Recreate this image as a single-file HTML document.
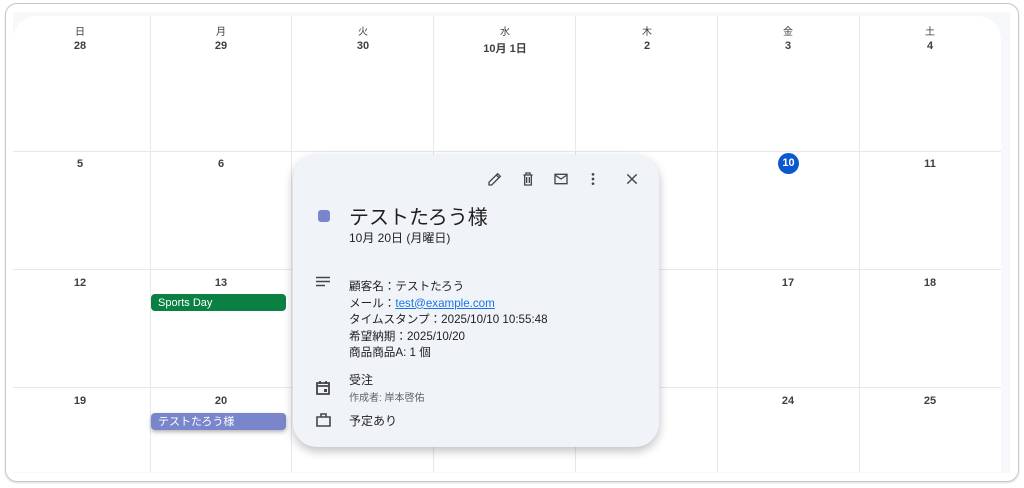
<!DOCTYPE html>
<html><head><meta charset="utf-8"><style>
*{margin:0;padding:0;box-sizing:border-box}
body{width:1024px;height:488px;background:#fff;font-family:"Liberation Sans","Noto Sans CJK JP",sans-serif;position:relative;overflow:hidden;color:#3c4043}
.frame{position:absolute;left:5px;top:3px;width:1014px;height:479px;border:1px solid #c8c8c8;border-radius:12px;background:#fff;box-shadow:0 1px 2px rgba(0,0,0,.15)}
.band{position:absolute;left:13px;top:12px;width:997px;height:461px;background:#f6f8fc}
.cal{position:absolute;left:13px;top:16px;width:988px;height:456px;background:#fff;border-radius:24px 24px 0 0}
.v{position:absolute;top:16px;height:456px;width:1px;background:#e6e8ec}
.h{position:absolute;left:13px;width:988px;height:1px;background:#e6e8ec}
.t{position:absolute;transform:translateX(-50%);font-size:11px;font-weight:bold;color:#3c4043;white-space:nowrap}
.d{position:absolute;transform:translateX(-50%);font-size:10px;color:#3c4043}
.ev{position:absolute;left:151px;width:135px;height:17px;border-radius:4px;color:#fff;font-size:11px;padding-left:7px;line-height:18px}
.pop{position:absolute;left:293px;top:155px;width:366px;height:292px;background:#f0f4f9;border-radius:24px;box-shadow:0 4px 10px rgba(0,0,0,.25)}
.p{position:absolute;white-space:nowrap}
svg{position:absolute}
</style></head><body>
<div class="frame"></div>
<div class="band"></div>
<div class="cal"></div>
<div class="v" style="left:150px"></div><div class="v" style="left:291px"></div><div class="v" style="left:433px"></div><div class="v" style="left:575px"></div><div class="v" style="left:717px"></div><div class="v" style="left:859px"></div>
<div class="h" style="top:151px"></div><div class="h" style="top:269px"></div><div class="h" style="top:387px"></div>
<div class="d" style="left:80px;top:23px">日</div><div class="d" style="left:221px;top:23px">月</div><div class="d" style="left:363px;top:23px">火</div><div class="d" style="left:505px;top:23px">水</div><div class="d" style="left:647px;top:23px">木</div><div class="d" style="left:788px;top:23px">金</div><div class="d" style="left:930px;top:23px">土</div>
<div class="t" style="left:80px;top:40px">28</div><div class="t" style="left:221px;top:40px">29</div><div class="t" style="left:363px;top:40px">30</div><div class="t" style="left:505px;top:40px">10月 1日</div><div class="t" style="left:647px;top:40px">2</div><div class="t" style="left:788px;top:40px">3</div><div class="t" style="left:930px;top:40px">4</div>
<div class="t" style="left:80px;top:158px">5</div><div class="t" style="left:221px;top:158px">6</div>
<div style="position:absolute;left:778px;top:153px;width:21px;height:21px;border-radius:50%;background:#0b57d0;color:#fff;font-size:11px;font-weight:bold;text-align:center;line-height:21px">10</div>
<div class="t" style="left:930px;top:158px">11</div>
<div class="t" style="left:80px;top:277px">12</div><div class="t" style="left:221px;top:277px">13</div><div class="t" style="left:788px;top:277px">17</div><div class="t" style="left:930px;top:277px">18</div>
<div class="t" style="left:80px;top:395px">19</div><div class="t" style="left:221px;top:395px">20</div><div class="t" style="left:788px;top:395px">24</div><div class="t" style="left:930px;top:395px">25</div>
<div class="ev" style="top:294px;background:#0b8043">Sports Day</div>
<div class="ev" style="top:413px;background:#7986cb;box-shadow:0 2px 4px rgba(0,0,0,.3)">テストたろう様</div>
<div class="pop"></div>
<svg style="left:487px;top:171px" width="16" height="16" viewBox="0 0 24 24"><path d="M3 21v-4L16 4l4 4L7 21zM14 6l4 4" fill="none" stroke="#444746" stroke-width="2"/></svg>
<svg style="left:520px;top:171px" width="16" height="16" viewBox="0 0 24 24"><path d="M5 6h14M9 6V3h6v3M7 6v15h10V6M10 9v9M14 9v9" fill="none" stroke="#444746" stroke-width="2"/></svg>
<svg style="left:553px;top:171px" width="16" height="16" viewBox="0 0 24 24"><path d="M3 5h18v14H3zM3 6l9 6 9-6" fill="none" stroke="#444746" stroke-width="2"/></svg>
<svg style="left:585px;top:171px" width="16" height="16" viewBox="0 0 24 24"><circle cx="12" cy="5" r="2" fill="#444746"/><circle cx="12" cy="12" r="2" fill="#444746"/><circle cx="12" cy="19" r="2" fill="#444746"/></svg>
<svg style="left:625px;top:172px" width="14" height="14" viewBox="0 0 24 24"><path d="M4 4l16 16M20 4L4 20" stroke="#444746" stroke-width="2.5"/></svg>
<div style="position:absolute;left:318px;top:210px;width:12px;height:12px;border-radius:3px;background:#7986cb"></div>
<div class="p" style="left:349px;top:201px;font-size:20px;color:#1f1f1f">テストたろう様</div>
<div class="p" style="left:349px;top:229px;font-size:12px;color:#1f1f1f">10月 20日 (月曜日)</div>
<svg style="left:316px;top:276px" width="14" height="12" viewBox="0 0 14 12"><path d="M0 1.5h14M0 5.5h14M0 9.5h9" stroke="#444746" stroke-width="1.6"/></svg>
<div class="p" style="left:349px;top:279px;font-size:11.6px;line-height:16.5px;color:#1f1f1f">顧客名：テストたろう<br>メール：<span style="color:#1a73e8;text-decoration:underline">test@example.com</span><br>タイムスタンプ：2025/10/10 10:55:48<br>希望納期：2025/10/20<br>商品商品A: 1 個</div>
<svg style="left:316px;top:380px" width="14" height="15" viewBox="0 0 14 15"><path d="M1 3h12v11H1zM1 6h12M4 1v3M10 1v3" fill="none" stroke="#444746" stroke-width="1.8"/><rect x="8" y="9" width="3" height="3" fill="#444746"/></svg>
<div class="p" style="left:349px;top:371px;font-size:12px;color:#1f1f1f">受注</div>
<div class="p" style="left:349px;top:389px;font-size:10px;color:#5f6368">作成者: 岸本啓佑</div>
<svg style="left:316px;top:413px" width="15" height="14" viewBox="0 0 15 14"><path d="M1 4h13v9H1zM5 4V1h5v3" fill="none" stroke="#444746" stroke-width="1.6"/></svg>
<div class="p" style="left:349px;top:412px;font-size:12px;color:#1f1f1f">予定あり</div>
</body></html>
